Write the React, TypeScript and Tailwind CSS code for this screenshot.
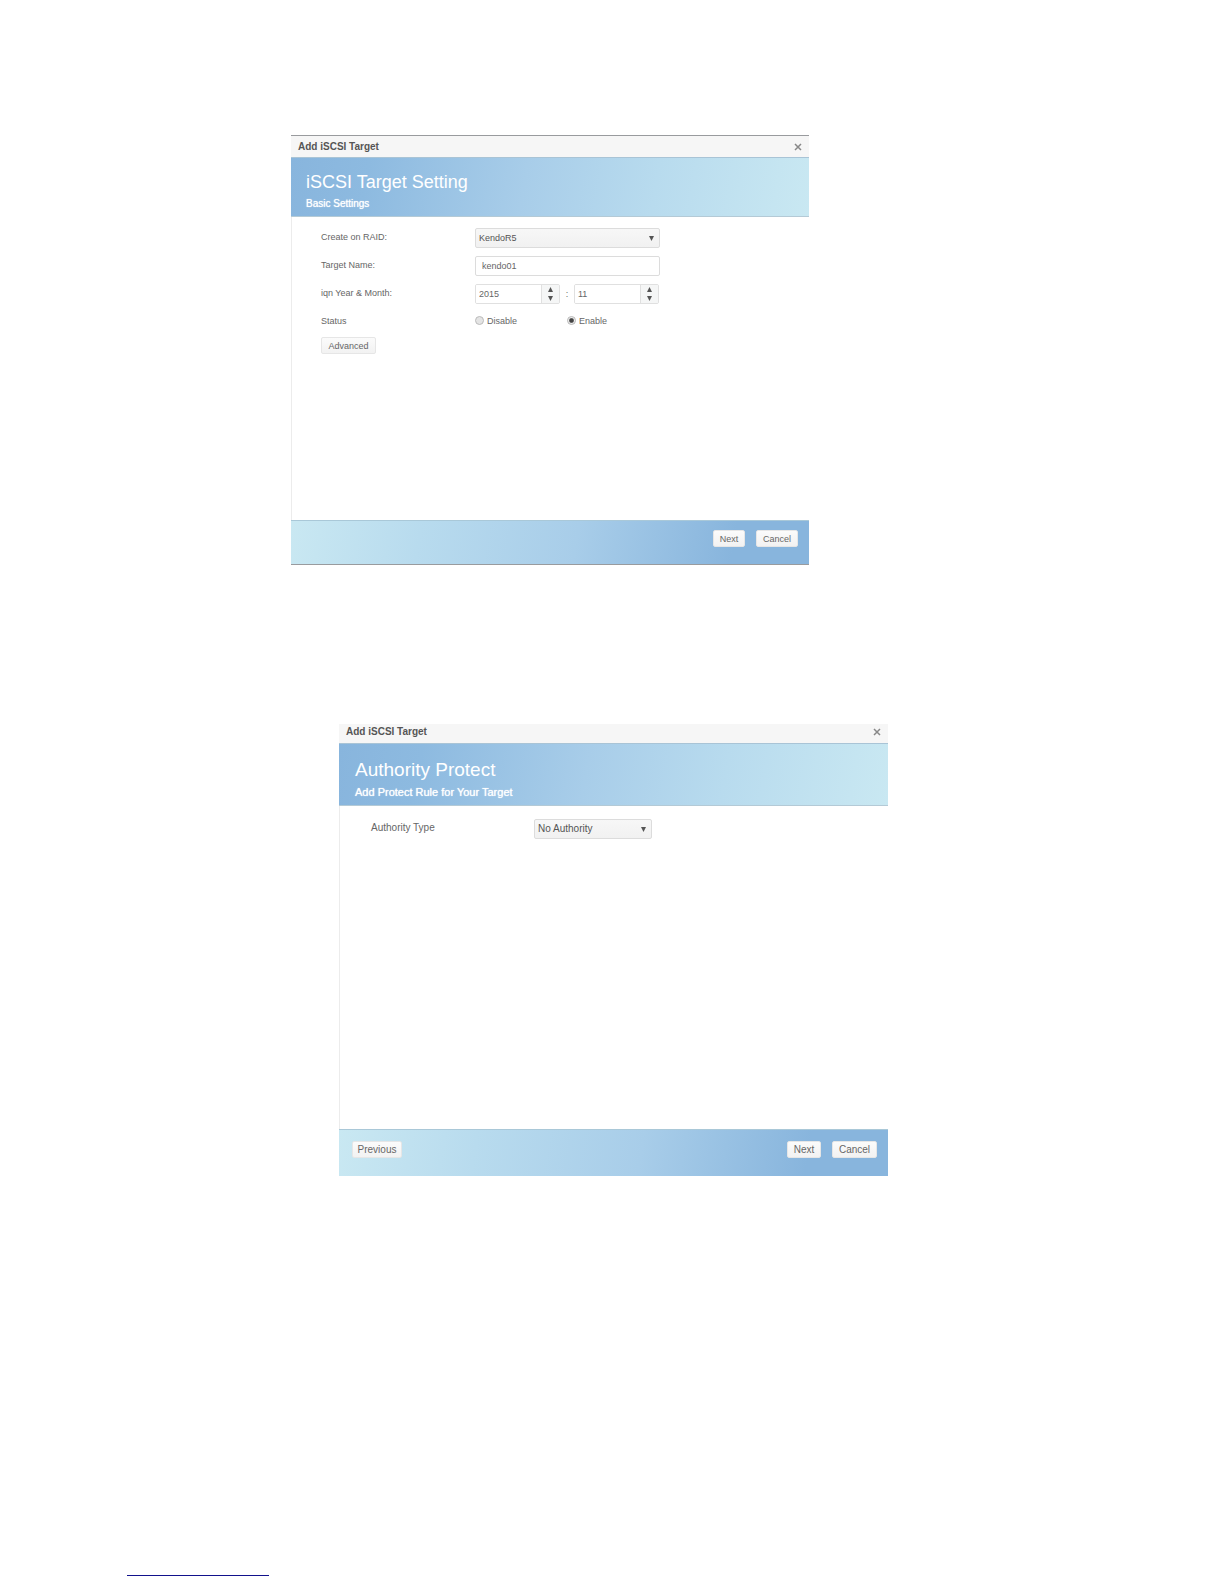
// src/App.tsx
import { useState, type ReactNode, type SelectHTMLAttributes } from 'react'
import clsx from 'clsx'

type DialogProps = {
  title: string
  heading: string
  subheading: string
  size: 'sm' | 'lg'
  className?: string
  footer: ReactNode
  children: ReactNode
}

function Dialog({ title, heading, subheading, size, className, footer, children }: DialogProps) {
  const lg = size === 'lg'
  return (
    <section
      role="dialog"
      aria-label={heading}
      className={clsx('flex w-full flex-col', !lg && 'border-y border-y-[#999b9e]', className)}
    >
      <header
        className={clsx(
          'flex items-center justify-between bg-[#f6f6f6] px-[7px]',
          lg ? 'h-[19px] pb-[3px]' : 'h-[21px]'
        )}
      >
        <h2 className="text-[10px] leading-3 font-bold text-[#555]">{title}</h2>
        <button type="button" aria-label="Close" className="text-[#888]">
          <svg width="8" height="8" viewBox="0 0 8 8" fill="none" stroke="currentColor" strokeWidth="1.5">
            <path d="M1 1l6 6M7 1L1 7" />
          </svg>
        </button>
      </header>

      <div
        className={clsx(
          'border-y border-t-[#a9c4d6] border-b-[#b4cad6] bg-linear-[100deg,#88b5dd_0%,#8dbae0_15%,#a8cde9_45%,#b8dbee_70%,#c9e8f2_100%] text-white',
          lg ? 'h-[63px] px-4 pt-[14px]' : 'h-[60px] px-[15px] pt-[12px]'
        )}
      >
        <h1 className={clsx('leading-6', lg ? 'text-[19px]' : 'text-[18px]')}>{heading}</h1>
        <p className={clsx('mt-1 leading-3 [text-shadow:0_0_1px_#fff]', lg ? 'text-[11px]' : 'text-[10px]')}>
          {subheading}
        </p>
      </div>

      <div
        className={clsx(
          'border-l border-[#ececec] bg-white text-[#666]',
          lg ? 'min-h-[323px] pt-[13px] pl-[31px]' : 'min-h-[303px] pt-[11px] pl-[29px]'
        )}
      >
        {children}
      </div>

      <footer
        className={clsx(
          'flex items-start border-t border-[#a9c8d8] bg-linear-[100deg,#c9e8f2_0%,#b8dbee_25%,#a8cde9_55%,#88b5dd_85%,#88b5dd_100%] pr-[11px] pl-[13px]',
          lg ? 'h-[47px] pt-[11px]' : 'h-[44px] pt-[9px]'
        )}
      >
        {footer}
      </footer>
    </section>
  )
}

function Button({ children, className }: { children: ReactNode; className?: string }) {
  return (
    <button
      type="button"
      className={clsx(
        'h-[17px] rounded-[2px] border border-[#e6e6e6] bg-linear-to-b from-[#fbfbfb] to-[#f2f2f2] text-center leading-[14px] text-[#666]',
        className
      )}
    >
      {children}
    </button>
  )
}

function Select({ className, children, ...props }: SelectHTMLAttributes<HTMLSelectElement>) {
  return (
    <div className={clsx('relative', className)}>
      <select
        {...props}
        className="block h-5 w-full appearance-none rounded-[2px] border border-[#dcdcdc] bg-linear-to-b from-[#f7f7f7] to-[#f1f1f1] pr-5 pb-px pl-[3px] leading-4 text-[#555]"
      >
        {children}
      </select>
      <svg className="pointer-events-none absolute top-2 right-[6px]" width="5" height="5" viewBox="0 0 5 5">
        <path d="M0 0h5L2.5 5z" fill="#555" />
      </svg>
    </div>
  )
}

type SpinnerProps = { id?: string; label?: string; value: number; onChange: (n: number) => void }

function Spinner({ id, label, value, onChange }: SpinnerProps) {
  return (
    <div className="flex h-5 w-[85px] overflow-hidden rounded-[2px] border border-[#e0e0e0]">
      <input
        id={id}
        aria-label={label}
        value={value}
        onChange={(e) => onChange(Number(e.target.value) || 0)}
        className="w-0 flex-1 bg-white pb-px pl-[3px]"
      />
      <div className="flex w-[18px] flex-col items-center justify-center gap-1 border-l border-[#e0e0e0] bg-[#f5f6f6]">
        <button type="button" aria-label="Increase" onClick={() => onChange(value + 1)}>
          <svg className="block" width="5" height="5" viewBox="0 0 5 5">
            <path d="M0 5h5L2.5 0z" fill="#555" />
          </svg>
        </button>
        <button type="button" aria-label="Decrease" onClick={() => onChange(value - 1)}>
          <svg className="block" width="5" height="5" viewBox="0 0 5 5">
            <path d="M0 0h5L2.5 5z" fill="#555" />
          </svg>
        </button>
      </div>
    </div>
  )
}

type RadioProps = { label: string; checked: boolean; onChange: () => void }

function Radio({ label, checked, onChange }: RadioProps) {
  return (
    <label className="flex w-[92px] items-center gap-[3px]">
      <input
        type="radio"
        name="status"
        checked={checked}
        onChange={onChange}
        className="mb-[2px] size-[9px] appearance-none rounded-full border border-[#bbb] bg-[#e4e4e4] checked:bg-radial checked:from-[#444] checked:from-35% checked:to-[#eee] checked:to-60%"
      />
      {label}
    </label>
  )
}

export default function App() {
  const [raid, setRaid] = useState('KendoR5')
  const [name, setName] = useState('kendo01')
  const [year, setYear] = useState(2015)
  const [month, setMonth] = useState(11)
  const [enabled, setEnabled] = useState(true)
  const [authority, setAuthority] = useState('none')

  return (
    <main className="flex min-h-screen flex-col bg-white font-['Liberation_Sans',Arial,sans-serif]">
      <Dialog
        title="Add iSCSI Target"
        heading="iSCSI Target Setting"
        subheading="Basic Settings"
        size="sm"
        className="mt-[135px] ml-[291px] max-w-[518px] text-[9px]"
        footer={
          <div className="ml-auto flex gap-[11px]">
            <Button className="w-8">Next</Button>
            <Button className="w-[42px]">Cancel</Button>
          </div>
        }
      >
        <form>
          <div className="grid grid-cols-[154px_185px] items-center gap-y-2 leading-3">
            <label htmlFor="raid" className="pb-[2px]">Create on RAID:</label>
            <Select id="raid" value={raid} onChange={(e) => setRaid(e.target.value)}>
              <option>KendoR5</option>
            </Select>

            <label htmlFor="target-name" className="pb-[2px]">Target Name:</label>
            <input
              id="target-name"
              value={name}
              onChange={(e) => setName(e.target.value)}
              className="h-5 rounded-[2px] border border-[#dcdcdc] bg-white px-[6px] pb-px"
            />

            <label htmlFor="iqn-year" className="pb-[2px]">iqn Year &amp; Month:</label>
            <div className="flex items-center justify-between pr-px">
              <Spinner id="iqn-year" value={year} onChange={setYear} />
              <span>:</span>
              <Spinner label="iqn Month" value={month} onChange={setMonth} />
            </div>

            <span className="pb-[2px]">Status</span>
            <div className="flex h-5 items-center pb-[2px]">
              <Radio label="Disable" checked={!enabled} onChange={() => setEnabled(false)} />
              <Radio label="Enable" checked={enabled} onChange={() => setEnabled(true)} />
            </div>
          </div>
          <Button className="mt-[5px] w-[55px]">Advanced</Button>
        </form>
      </Dialog>

      <Dialog
        title="Add iSCSI Target"
        heading="Authority Protect"
        subheading="Add Protect Rule for Your Target"
        size="lg"
        className="mt-[159px] ml-[339px] max-w-[549px] text-[10px]"
        footer={
          <>
            <Button className="w-[50px]">Previous</Button>
            <div className="ml-auto flex gap-[11px]">
              <Button className="w-[34px]">Next</Button>
              <Button className="w-[45px]">Cancel</Button>
            </div>
          </>
        }
      >
        <form className="grid grid-cols-[163px_118px] items-center leading-3">
          <label htmlFor="authority" className="pb-[2px]">Authority Type</label>
          <Select id="authority" value={authority} onChange={(e) => setAuthority(e.target.value)}>
            <option value="none">No Authority</option>
          </Select>
        </form>
      </Dialog>

      <hr className="mt-auto mb-2 ml-[127px] h-px w-[142px] border-0 bg-[#12128c]" />
    </main>
  )
}
